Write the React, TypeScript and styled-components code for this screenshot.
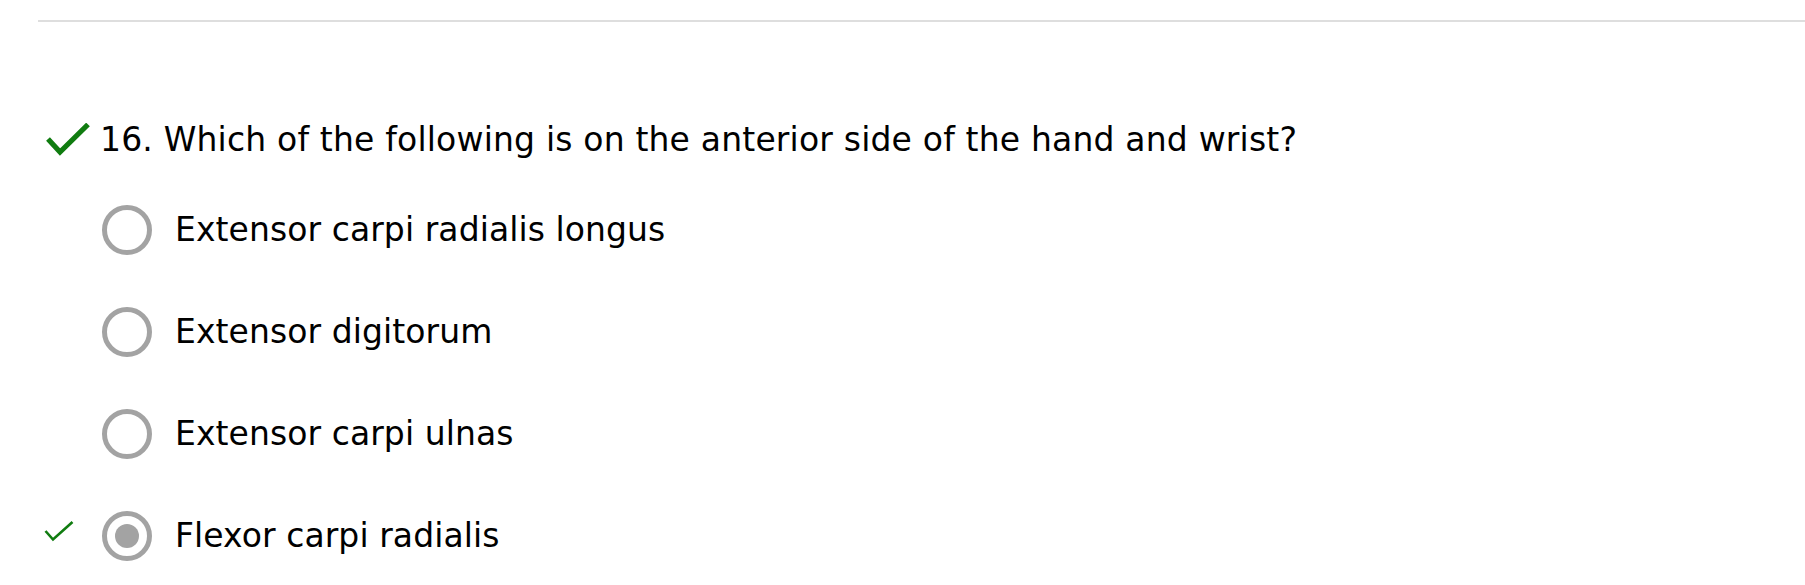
import React from 'react';
import styled, { createGlobalStyle } from 'styled-components';

const GlobalStyle = createGlobalStyle`
  body {
    margin: 0;
    background: #fff;
    font-family: "DejaVu Sans", Verdana, sans-serif;
    color: #000;
  }
`;

const options = [
  { text: 'Extensor carpi radialis longus', selected: false, correct: false },
  { text: 'Extensor digitorum', selected: false, correct: false },
  { text: 'Extensor carpi ulnas', selected: false, correct: false },
  { text: 'Flexor carpi radialis', selected: true, correct: true }
];

const BigCheck = () => (
  <CheckSvg width='44' height='34' viewBox='0 0 44 34'>
    <polyline points='2,16 14,29 42,1.5' fill='none' stroke='#107c10' strokeWidth='5.2' />
  </CheckSvg>
);

const SmallCheck = () => (
  <svg width='30' height='22' viewBox='0 0 30 22'>
    <polyline points='1.5,11 9,19.5 28.5,2' fill='none' stroke='#107c10' strokeWidth='2.6' />
  </svg>
);

const App = () => (
  <>
    <GlobalStyle />
    <Page>
      <Divider />
      <Question>
        <BigCheck />
        <QuestionText>16. Which of the following is on the anterior side of the hand and wrist?</QuestionText>
      </Question>
      <OptionList>
        {options.map(o => (
          <Option key={o.text}>
            <Mark>{o.correct && <SmallCheck />}</Mark>
            <Radio selected={o.selected} />
            <Label>{o.text}</Label>
          </Option>
        ))}
      </OptionList>
    </Page>
  </>
);

const Page = styled.div`
  padding: 20px 0 0 38px;
`;

const Divider = styled.div`
  border-top: 2px solid #dedede;
`;

const Question = styled.div`
  display: flex;
  align-items: center;
  margin-top: 98px;
  font-size: 33px;
  line-height: 40px;
`;

const CheckSvg = styled.svg`
  margin-left: 8px;
  margin-right: 10px;
  flex: none;
`;

const QuestionText = styled.span`
  white-space: nowrap;
  letter-spacing: 0.18px;
`;

const OptionList = styled.ul`
  list-style: none;
  margin: 19px 0 0;
  padding: 0;
`;

const Option = styled.li`
  display: grid;
  grid-template-columns: 64px 50px auto;
  align-items: center;
  height: 102px;
  font-size: 33px;
  line-height: 40px;
`;

const Mark = styled.span`
  display: flex;
  align-items: center;
  padding-left: 6px;
  height: 22px;
  margin-bottom: 10px;
`;

const Radio = styled.span<{ selected: boolean }>`
  box-sizing: border-box;
  width: 50px;
  height: 50px;
  border: 5px solid #a3a3a3;
  border-radius: 50%;
  display: flex;
  align-items: center;
  justify-content: center;

  &::after {
    content: '';
    display: ${p => (p.selected ? 'block' : 'none')};
    width: 24px;
    height: 24px;
    border-radius: 50%;
    background: #a3a3a3;
  }
`;

const Label = styled.span`
  margin-left: 23px;
  white-space: nowrap;
  letter-spacing: 0.08px;
`;

export default App;
